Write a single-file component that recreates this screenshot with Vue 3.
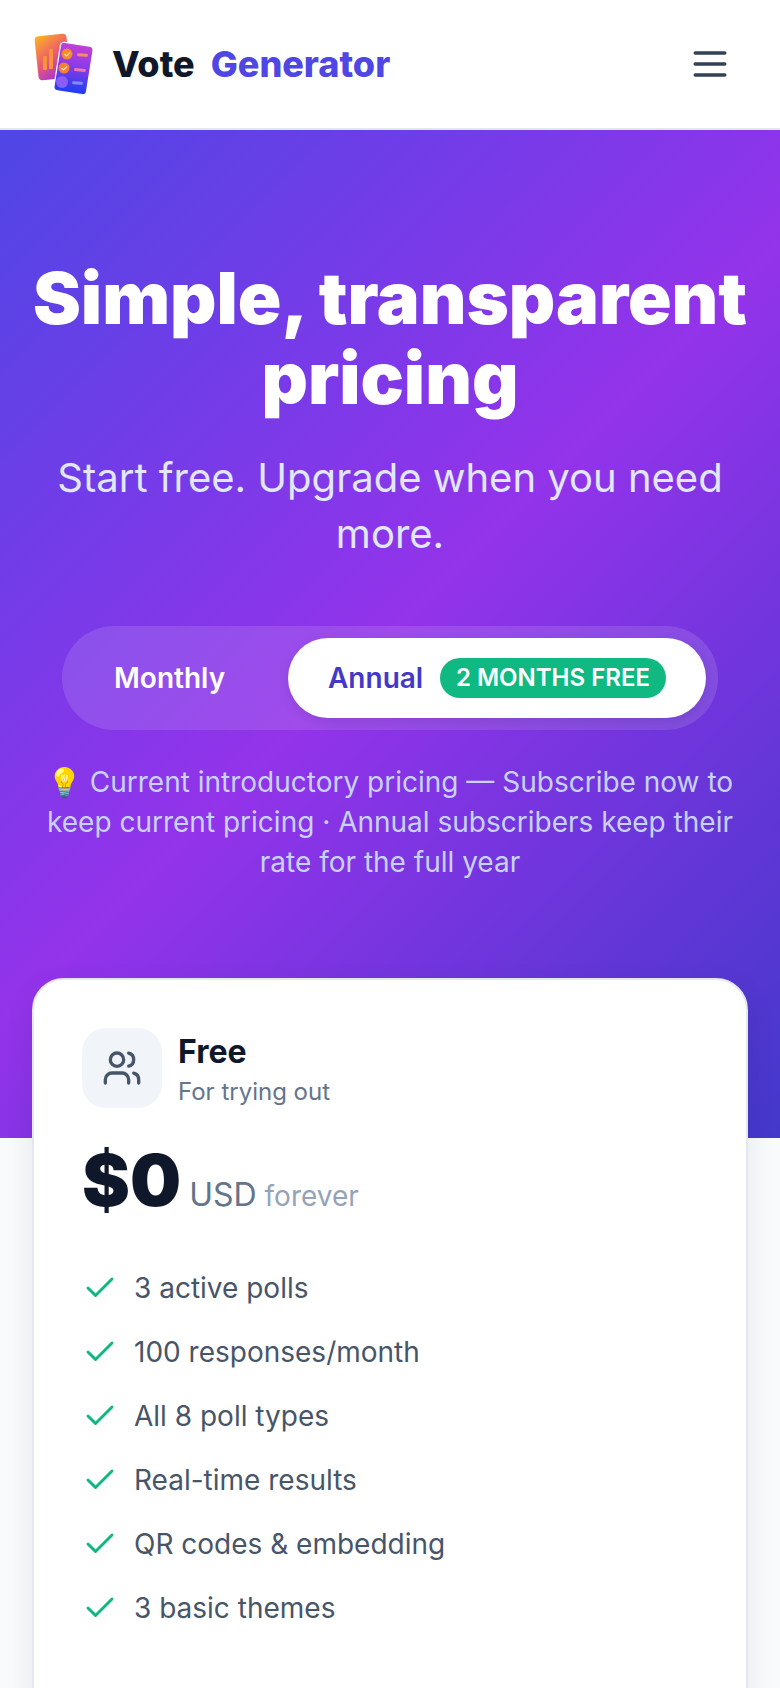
<script setup>
const features = ['3 active polls', '100 responses/month', 'All 8 poll types', 'Real-time results', 'QR codes & embedding', '3 basic themes']
</script>

<template>
  <div class="page">
    <header class="nav">
      <div class="brand">
        <svg class="logo" width="64" height="64" viewBox="0 0 64 64">
          <defs>
            <linearGradient id="lg1" x1="0.1" y1="0" x2="0.6" y2="1">
              <stop offset="0" stop-color="#fbb024" />
              <stop offset="0.5" stop-color="#ee5f6a" />
              <stop offset="1" stop-color="#a32fe0" />
            </linearGradient>
            <linearGradient id="lg2" x1="0.5" y1="0" x2="0.5" y2="1">
              <stop offset="0" stop-color="#c440d4" />
              <stop offset="0.45" stop-color="#8a3ae8" />
              <stop offset="1" stop-color="#1a3ff0" />
            </linearGradient>
          </defs>
          <rect x="3.5" y="3" width="32" height="44" rx="4" fill="url(#lg1)" transform="rotate(-6 19.5 25)" />
          <rect x="10" y="24" width="4" height="14" rx="1" fill="#fb923c" />
          <rect x="16" y="17" width="4" height="20" rx="1" fill="#fb923c" />
          <rect x="24" y="12" width="33" height="49" rx="4" fill="url(#lg2)" stroke="#fff" stroke-width="1.2" transform="rotate(9 40.5 36.5)" />
          <circle cx="34" cy="22" r="5.5" fill="#f78a2a" />
          <path d="M31.5 22l2 2 3.5-3.5" fill="none" stroke="#fde3b0" stroke-width="1.2" />
          <circle cx="31" cy="36" r="5.5" fill="#f5812f" />
          <path d="M28.5 36l2 2 3.5-3.5" fill="none" stroke="#fde3b0" stroke-width="1.2" />
          <circle cx="29" cy="50" r="6" fill="#8b5cf6" />
          <rect x="44" y="21.5" width="11" height="3" rx="1.5" fill="#fb8a5c" transform="rotate(5 49.5 23)" />
          <rect x="41" y="36.5" width="12" height="3" rx="1.5" fill="#f472b6" transform="rotate(5 47 38)" />
          <rect x="39" y="49.5" width="11" height="3" rx="1.5" fill="#818cf8" transform="rotate(5 44.5 51)" />
        </svg>
        <span class="brand-a">Vote</span>
        <span class="brand-b">Generator</span>
      </div>
      <svg class="burger" width="44" height="44" viewBox="0 0 24 24" fill="none" stroke="#334155" stroke-width="2" stroke-linecap="round">
        <path d="M4 6h16M4 12h16M4 18h16" />
      </svg>
    </header>

    <section class="hero">
      <h1>Simple, transparent pricing</h1>
      <p class="sub">Start free. Upgrade when you need more.</p>
      <div class="toggle">
        <div class="opt">Monthly</div>
        <div class="opt active">Annual <span class="badge">2 MONTHS FREE</span></div>
      </div>
      <p class="note">💡 Current introductory pricing — Subscribe now to keep current pricing · Annual subscribers keep their rate for the full year</p>
    </section>

    <main class="content">
      <div class="card">
        <div class="plan">
          <div class="plan-icon">
            <svg width="40" height="40" viewBox="0 0 24 24" fill="none" stroke="#475569" stroke-width="2" stroke-linecap="round" stroke-linejoin="round">
              <path d="M16 21v-2a4 4 0 0 0-4-4H6a4 4 0 0 0-4 4v2" />
              <circle cx="9" cy="7" r="4" />
              <path d="M22 21v-2a4 4 0 0 0-3-3.87" />
              <path d="M16 3.13a4 4 0 0 1 0 7.75" />
            </svg>
          </div>
          <div class="plan-text">
            <div class="plan-name">Free</div>
            <div class="plan-desc">For trying out</div>
          </div>
        </div>
        <div class="price">
          <span class="amount">$0</span>
          <span class="cur">USD</span>
          <span class="per">forever</span>
        </div>
        <ul class="features">
          <li v-for="f in features" :key="f">
            <svg width="36" height="36" viewBox="0 0 24 24" fill="none" stroke="#10b981" stroke-width="2" stroke-linecap="round" stroke-linejoin="round">
              <path d="M20 6 9 17l-5-5" />
            </svg>
            {{ f }}
          </li>
        </ul>
      </div>
    </main>
  </div>
</template>

<style scoped>
.page {
  width: 780px;
  height: 1688px;
  overflow: hidden;
  background: #f8fafc;
  font-family: Inter, "Liberation Sans", sans-serif;
  position: relative;
}

.nav {
  height: 130px;
  background: #fff;
  border-bottom: 2px solid #e2e8f0;
  display: flex;
  align-items: center;
  justify-content: space-between;
  padding: 0 48px 0 33px;
  box-sizing: border-box;
}

.brand {
  display: flex;
  align-items: center;
}

.logo {
  margin-right: 15px;
}

.brand-a {
  font-size: 36px;
  font-weight: 800;
  color: #0f172a;
  margin-right: 16px;
}

.brand-b {
  font-size: 36px;
  font-weight: 800;
  color: #4f46e5;
}

.hero {
  height: 1008px;
  box-sizing: border-box;
  padding: 128px 32px 0;
  background: linear-gradient(135deg, #4f46e5 0%, #9333ea 50%, #4338ca 100%);
  text-align: center;
}

h1 {
  margin: 0;
  font-size: 72px;
  line-height: 80px;
  font-weight: 900;
  color: #fff;
}

.sub {
  margin: 32px 0 0;
  font-size: 40px;
  line-height: 56px;
  color: #e0e7ff;
}

.toggle {
  margin: 64px auto 0;
  width: 656px;
  height: 104px;
  box-sizing: border-box;
  padding: 12px;
  border-radius: 52px;
  background: rgba(255, 255, 255, 0.12);
  display: flex;
  align-items: center;
  gap: 24px;
}

.opt {
  font-size: 28px;
  font-weight: 600;
  color: #fff;
  padding: 0 40px;
  width: 190px;
  box-sizing: border-box;
}

.opt.active {
  height: 80px;
  width: 418px;
  border-radius: 40px;
  background: #fff;
  color: #4338ca;
  display: flex;
  align-items: center;
  justify-content: space-between;
  box-shadow: 0 4px 12px rgba(0, 0, 0, 0.1);
}

.badge {
  background: #10b981;
  color: #fff;
  font-size: 24px;
  line-height: 32px;
  font-weight: 600;
  border-radius: 20px;
  padding: 4px 16px;
}

.note {
  margin: 32px 0 0;
  font-size: 28px;
  line-height: 40px;
  color: #c7d2fe;
}

.content {
  padding: 0 32px;
  margin-top: -160px;
  position: relative;
}

.card {
  background: #fff;
  border: 2px solid #e2e8f0;
  border-radius: 32px;
  padding: 48px;
  height: 800px;
  box-sizing: border-box;
  box-shadow: 0 10px 30px rgba(15, 23, 42, 0.08);
}

.plan {
  display: flex;
  align-items: center;
  gap: 16px;
}

.plan-text {
  padding-top: 4px;
}

.plan-name {
  font-size: 32px;
  line-height: 40px;
  font-weight: 700;
  color: #0f172a;
}

.plan-desc {
  font-size: 24px;
  line-height: 32px;
  color: #64748b;
  margin-top: 4px;
}

.plan-icon {
  width: 80px;
  height: 80px;
  background: #f1f5f9;
  border-radius: 24px;
  display: flex;
  align-items: center;
  justify-content: center;
}

.price {
  margin-top: 32px;
  display: flex;
  align-items: baseline;
  gap: 8px;
}

.amount {
  font-size: 72px;
  line-height: 80px;
  font-weight: 900;
  color: #0f172a;
}

.cur {
  font-size: 32px;
  color: #64748b;
}

.per {
  font-size: 28px;
  color: #94a3b8;
}

.features {
  list-style: none;
  margin: 36px 0 0;
  padding: 0;
}

.features li {
  display: flex;
  align-items: center;
  gap: 16px;
  height: 64px;
  font-size: 28px;
  color: #475569;
}
</style>
